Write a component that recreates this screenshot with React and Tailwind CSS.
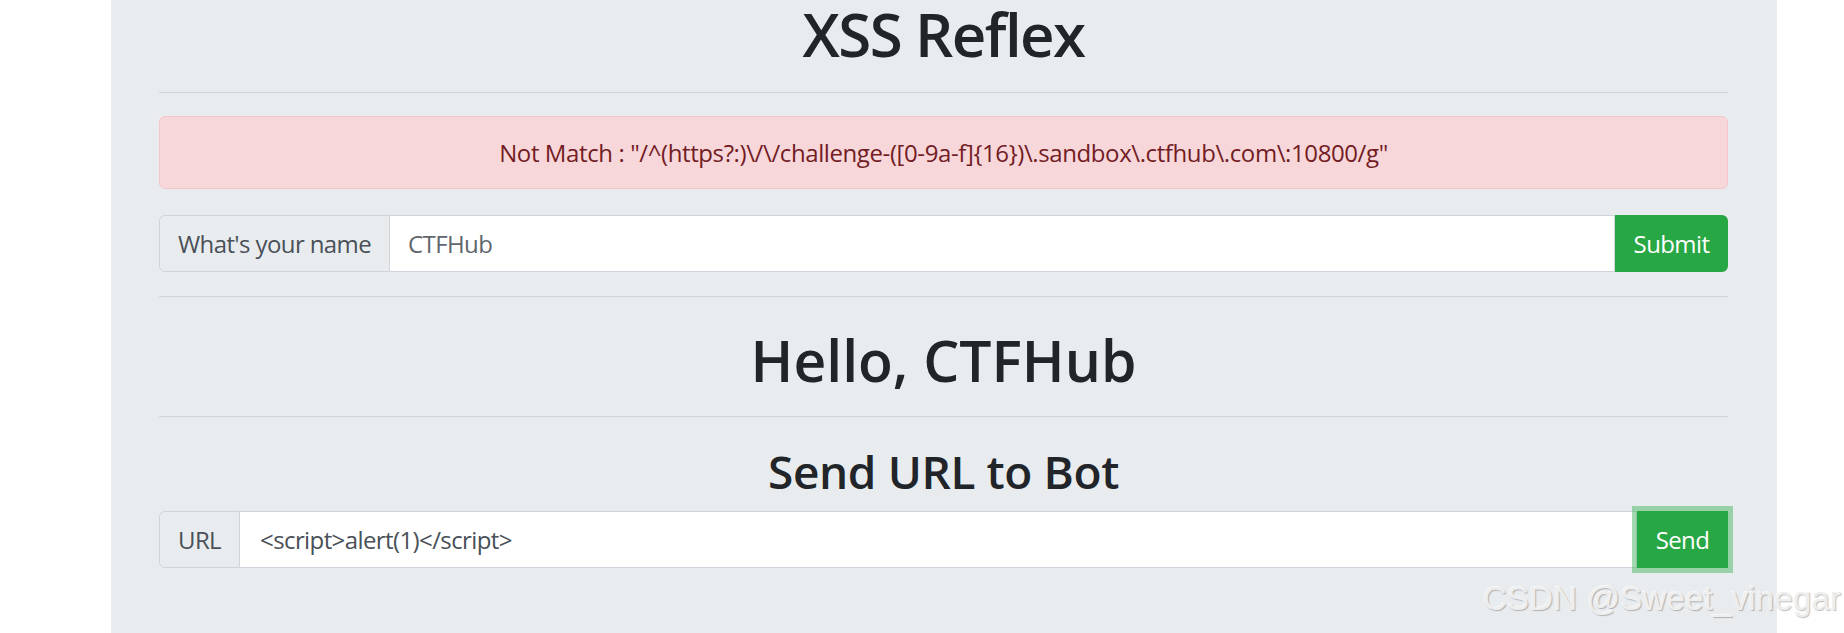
import React from "react";

const font = { fontFamily: '"Open Sans", "Noto Sans", sans-serif' };

export default function App() {
  return (
    <div
      className="relative w-[1844px] h-[633px] overflow-hidden bg-white"
      style={font}
    >
      <div className="ml-[111px] w-[1666px] h-[633px] bg-[#e9ecef] pl-[48px] pr-[49px] flex flex-col text-[#212529]">
        <h1 className="h-[68px] leading-[68px] text-[60px] font-semibold text-center tracking-[-1.6px]">
          XSS Reflex
        </h1>
        <div className="mt-[24px] h-px bg-[#d2d4d7]" />
        <div className="mt-[23px] h-[73px] rounded-[6px] border border-[#f5c6cb] bg-[#f8d7da] text-[#721c24] text-[24px] leading-[36px] flex items-center justify-center tracking-[-0.4px]">
          Not Match : "/^(https?:)\/\/challenge-([0-9a-f]{"{"}16{"}"})\.sandbox\.ctfhub\.com\:10800/g"
        </div>
        <div className="mt-[26px] h-[57px] flex text-[24px] tracking-[-0.6px]">
          <div className="flex items-center px-[18px] border border-[#ced4da] bg-[#e9ecef] text-[#495057] rounded-l-[6px]">
            What's your name
          </div>
          <div className="flex-1 flex items-center px-[18px] bg-white border-y border-r border-[#ced4da] text-[#5f666d]">
            CTFHub
          </div>
          <div className="w-[113px] flex items-center justify-center bg-[#28a745] text-white rounded-r-[6px]">
            Submit
          </div>
        </div>
        <div className="mt-[24px] h-px bg-[#d2d4d7]" />
        <h2 className="mt-[31px] h-[65px] leading-[65px] text-[57px] font-semibold text-center tracking-[0px]">
          Hello, CTFHub
        </h2>
        <div className="mt-[23px] h-px bg-[#d2d4d7]" />
        <h3 className="mt-[27px] h-[55px] leading-[55px] text-[46px] font-semibold text-center tracking-[-0.4px]">
          Send URL to Bot
        </h3>
        <div className="mt-[12px] h-[57px] flex text-[24px] tracking-[-0.6px]">
          <div className="flex items-center px-[18px] border border-[#ced4da] bg-[#e9ecef] text-[#495057] rounded-l-[6px]">
            URL
          </div>
          <div className="flex-1 flex items-center px-[20px] bg-white border-y border-r border-[#ced4da] text-[#495057]">
            {"<script>alert(1)</script>"}
          </div>
          <div className="w-[91px] flex items-center justify-center bg-[#28a745] text-white shadow-[0_0_0_5px_rgba(72,180,97,0.5)]">
            Send
          </div>
        </div>
      </div>
      <div
        className="absolute left-[1483px] top-[579px] whitespace-nowrap text-[33px] leading-[40px] tracking-[0.2px] text-[#eeeeee]"
        style={{
          fontFamily: '"Liberation Sans", Arial, sans-serif',
          textShadow: "1px 1px 1px rgba(0,0,0,0.25), -1px -1px 0 rgba(255,255,255,0.6)",
        }}
      >
        CSDN @Sweet_vinegar
      </div>
    </div>
  );
}
